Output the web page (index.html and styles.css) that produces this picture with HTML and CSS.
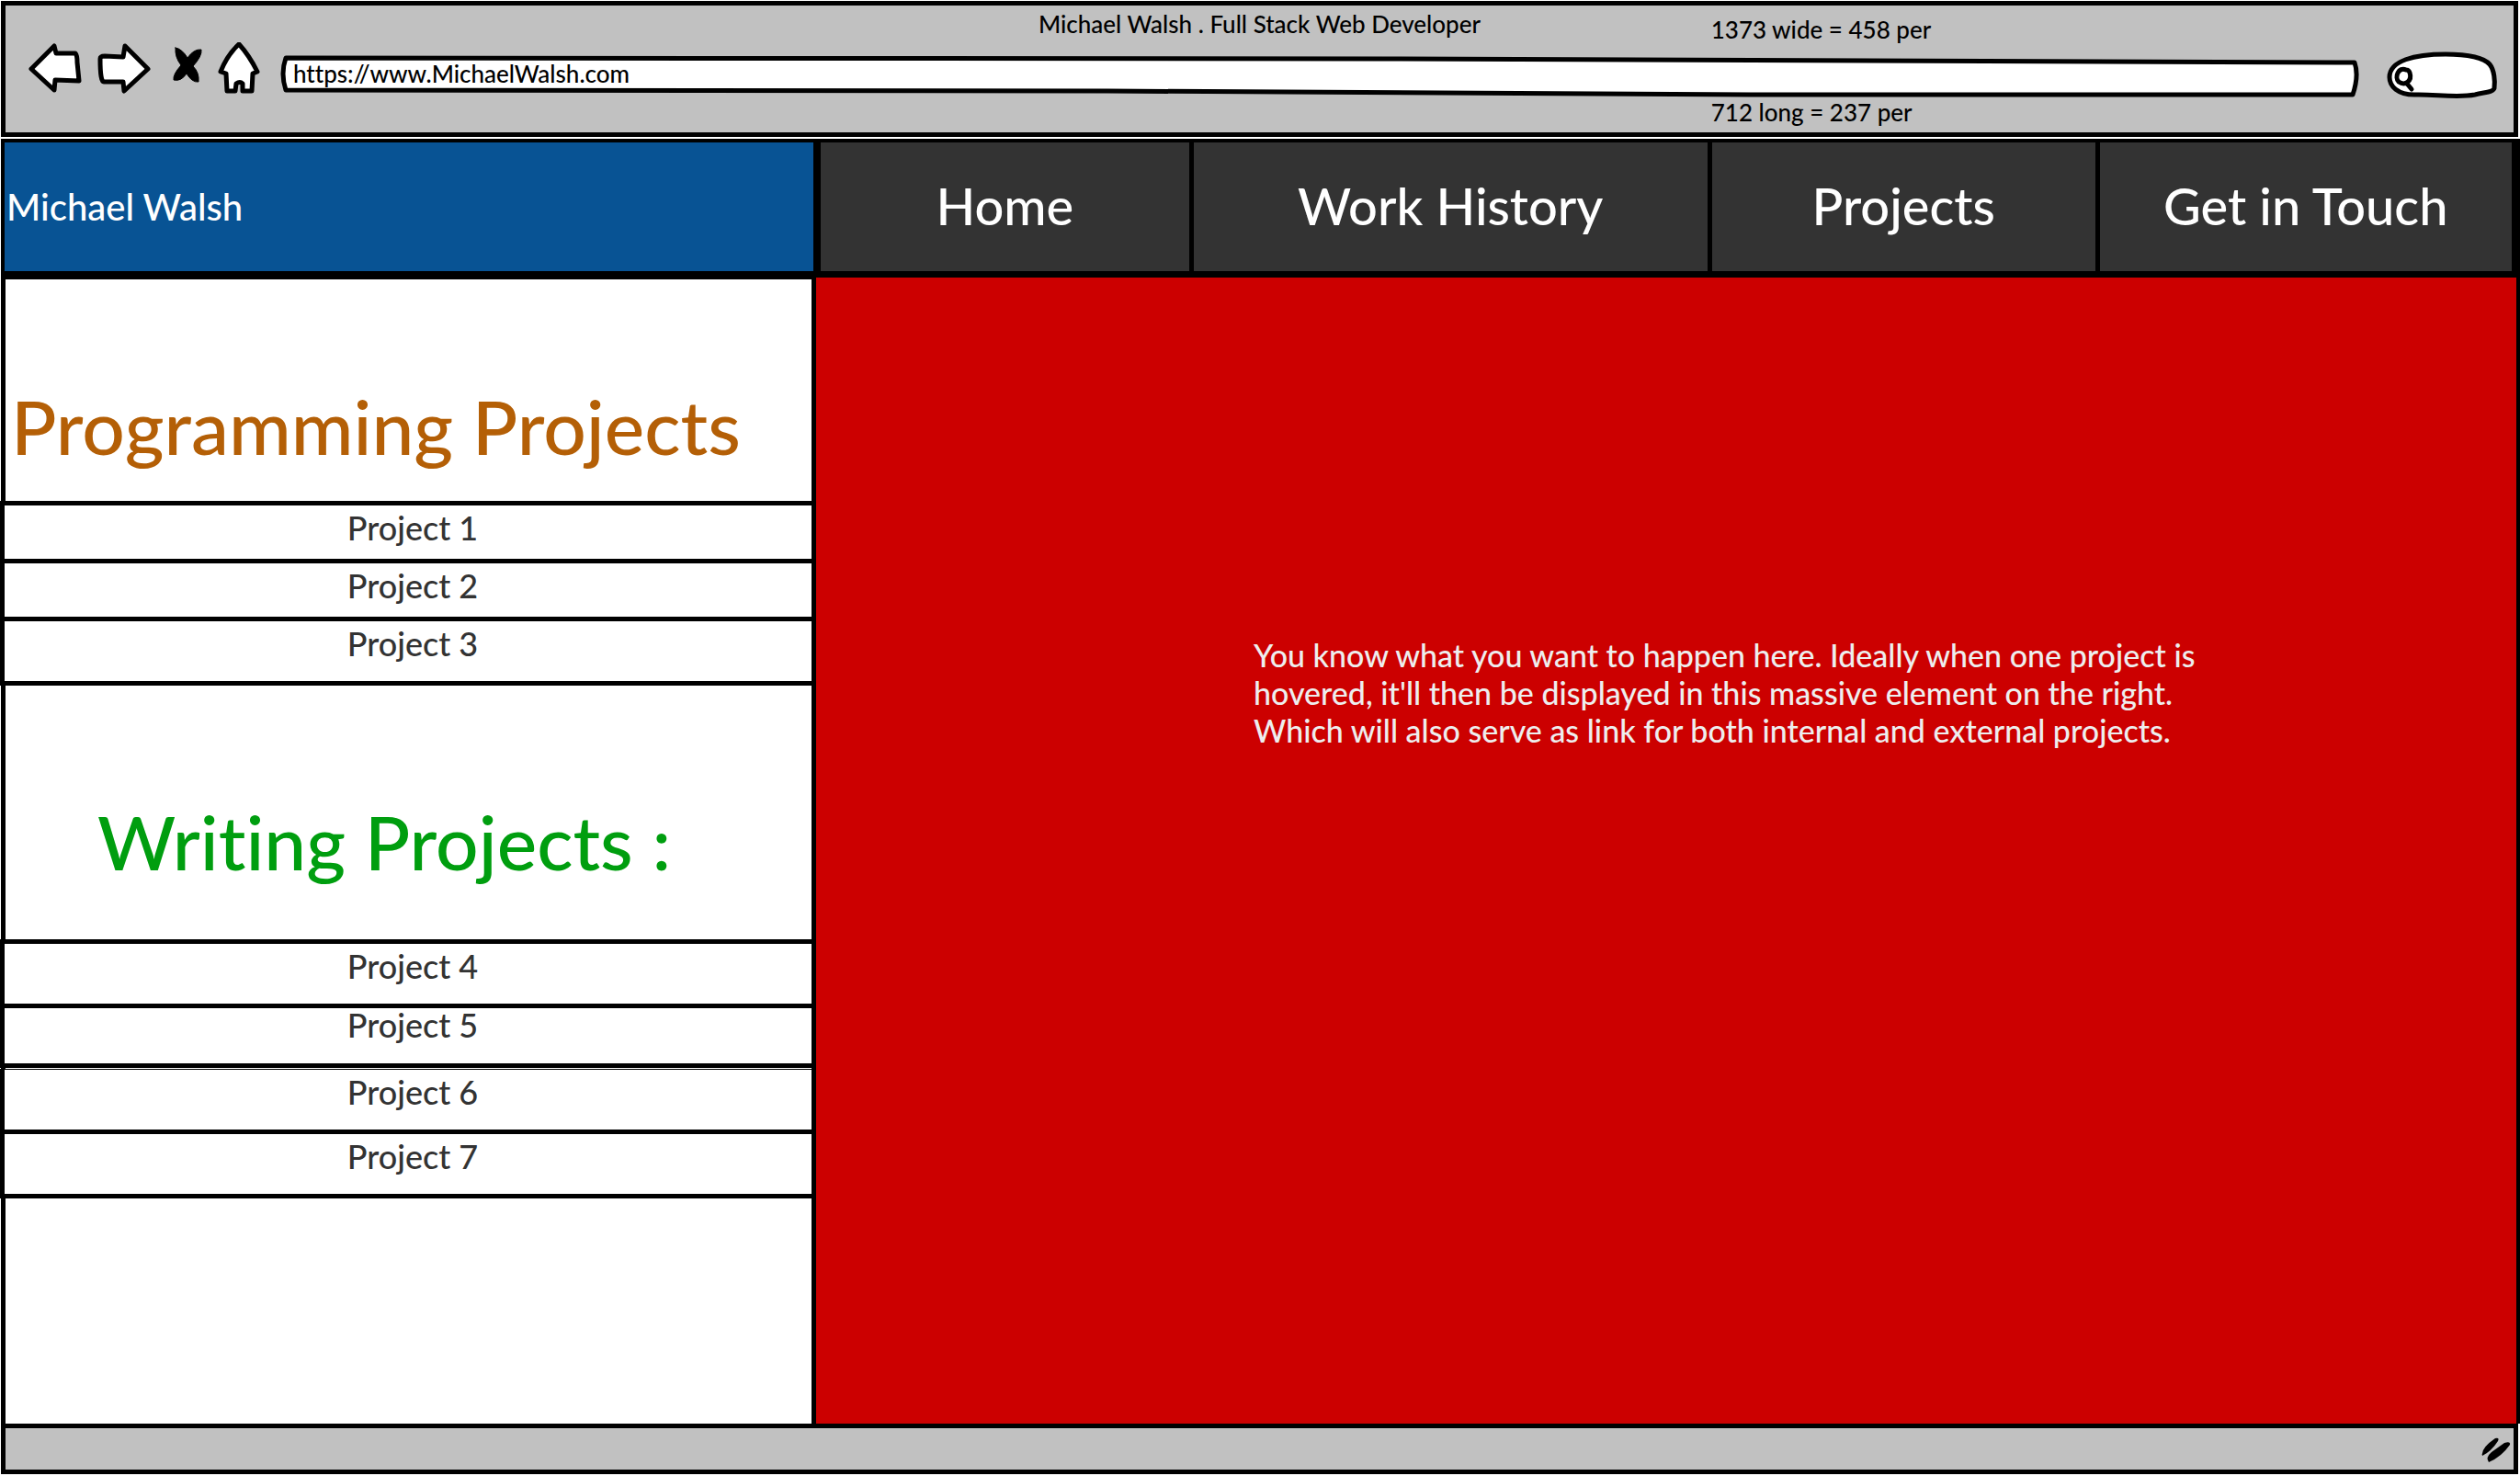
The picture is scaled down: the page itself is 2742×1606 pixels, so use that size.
FILE: index.html
```html
<!DOCTYPE html>
<html lang="en">
<head>
<meta charset="utf-8">
<meta name="viewport" content="width=device-width, initial-scale=1">
<title>Michael Walsh . Full Stack Web Developer</title>
<link rel="stylesheet" href="styles.css">
</head>
<body>
<div class="window">
  <header class="chrome">
    <div class="chrome-top">
      <p class="chrome-title">Michael Walsh . Full Stack Web Developer</p>
      <p class="note">1373 wide = 458 per</p>
    </div>
    <div class="toolbar">
      <button class="tool" type="button" aria-label="Back">
        <svg width="58" height="56" viewBox="0 0 58 56"><path d="M3 29 L28 4 L30 12 L51 12 Q53 14 53 22 L55 42 L29 41 L28 52 Z"/></svg>
      </button>
      <button class="tool" type="button" aria-label="Forward">
        <svg width="60" height="56" viewBox="0 0 60 56"><path d="M4 18 Q4 15 9 15 L29 16 L31 4 L56 29 L30 53 L29 43 L8 43 Q4 43 4 18 Z"/></svg>
      </button>
      <button class="tool tool-stop" type="button" aria-label="Stop">
        <svg width="34" height="56" viewBox="0 0 34 56"><path class="solid" d="M4 6 Q11 7 17 17 Q24 7 32 8 Q33 15 23 26 Q30 33 29 43 Q22 44 16 34 Q10 43 2 41 Q1 35 10 25 Q3 16 4 6 Z"/></svg>
      </button>
      <button class="tool" type="button" aria-label="Home">
        <svg width="46" height="58" viewBox="0 0 46 58"><path d="M23 2 Q34 14 43 32 L38 34 L37 53 L27 53 L27 45 Q24 42 20 45 L19 53 L10 53 L9 34 L3 32 Q10 14 23 2 Z"/></svg>
      </button>
      <div class="address">
        <svg class="outline" viewBox="0 0 2264 46" preserveAspectRatio="none" aria-hidden="true"><path d="M6 3 L1200 4 L2257 8 Q2262 22 2255 43 L1600 43 L900 39 L6 38 Q0 20 6 3 Z"/></svg>
        <input class="address-input" type="text" value="https://www.MichaelWalsh.com" aria-label="Address">
      </div>
      <div class="search">
        <svg class="outline" viewBox="0 0 120 52" preserveAspectRatio="none" aria-hidden="true"><path d="M3 28 C3 10 30 3 64 3 C88 3 106 7 112 14 C117 20 118 32 117 40 C116 44 108 44 96 47 C76 51 50 46 30 47 C12 47 3 38 3 28 Z"/><path d="M21 20 C13 16 8 28 13 33 C20 38 28 32 25 23 Q24 20 21 20 M22 35 L27 41"/></svg>
        <input class="search-input" type="search" aria-label="Search">
      </div>
    </div>
    <p class="note">712 long = 237 per</p>
  </header>

  <div class="banner">
    <a class="brand" href="#home">Michael Walsh</a>
    <nav class="nav">
      <a class="nav-link nav-home" href="#home">Home</a>
      <a class="nav-link nav-work" href="#work">Work History</a>
      <a class="nav-link nav-projects" href="#projects">Projects</a>
      <a class="nav-link nav-contact" href="#contact">Get in Touch</a>
    </nav>
  </div>

  <main class="content">
    <aside class="sidebar">
      <h1 class="group-title programming">Programming Projects</h1>
      <ul class="projects">
        <li><a class="project short" href="#p1">Project 1</a></li>
        <li><a class="project short" href="#p2">Project 2</a></li>
        <li><a class="project" href="#p3">Project 3</a></li>
      </ul>
      <h1 class="group-title writing">Writing Projects :</h1>
      <ul class="projects">
        <li><a class="project" href="#p4">Project 4</a></li>
        <li><a class="project closed" href="#p5">Project 5</a></li>
        <li><a class="project thin" href="#p6">Project 6</a></li>
        <li><a class="project" href="#p7">Project 7</a></li>
      </ul>
    </aside>
    <section class="preview">
      <p class="preview-text">You know what you want to happen here. Ideally when one project is<br>hovered, it'll then be displayed in this massive element on the right.<br>Which will also serve as link for both internal and external projects.</p>
    </section>
  </main>

  <footer class="status">
    <svg class="grip" width="32" height="28" viewBox="0 0 32 28" aria-hidden="true"><path d="M15 1 Q20 0 18 4 Q11 15 1 20 Q-1 12 15 1 Z"/><path d="M25 6 Q32 4 31 8 Q22 21 8 27 Q4 22 11 16 Z"/></svg>
  </footer>
</div>
</body>
</html>
```
FILE: styles.css
```css
* { box-sizing: border-box; }

body {
  margin: 0;
  background: #fff;
  color: #000;
  font-family: Lato, "Open Sans", sans-serif;
  font-weight: 500;
  font-variant-ligatures: none;
}

p, h1, ul { margin: 0; padding: 0; }
ul { list-style: none; }
a { color: inherit; text-decoration: none; }

.window {
  display: flex;
  flex-direction: column;
  min-height: 100vh;
  padding: 1px 0 2px 1px;
}

/* Browser chrome */
.chrome {
  display: flex;
  flex-direction: column;
  height: 148px;
  margin-right: 2px;
  border: 5px solid #000;
  background: #c1c1c1;
  font-size: 26px;
  line-height: 32px;
}
.chrome-top { display: grid; height: 40px; }
.chrome-title { grid-area: 1 / 1; padding-top: 4px; text-align: center; }
.note { padding-left: 68%; }
.chrome-top .note { grid-area: 1 / 1; padding-top: 10px; }

.toolbar {
  display: flex;
  height: 60px;
  padding: 0 18px 0 25px;
}
.tool {
  flex: none;
  align-self: flex-start;
  margin: 0 16px 0 0;
  padding: 0;
  border: 0;
  background: none;
}
.tool-stop { margin-left: 6px; }
.tool svg { display: block; }
.tool path, .outline path {
  fill: #fff;
  stroke: #000;
  stroke-width: 5px;
  stroke-linejoin: round;
  stroke-linecap: round;
}
.tool .solid { fill: #000; stroke-width: 1px; }

.address, .search { display: grid; }
.address { flex: 1; height: 46px; margin: 14px 28px 0 6px; }
.search { flex: none; width: 120px; height: 52px; margin-top: 10px; }
.outline { grid-area: 1 / 1; width: 100%; height: 100%; overflow: visible; }
.address-input, .search-input {
  grid-area: 1 / 1;
  z-index: 1;
  width: 100%;
  min-width: 0;
  border: 0;
  background: transparent;
  color: #000;
  font: inherit;
  outline: 0;
}
.address-input { height: 40px; padding: 0 14px; }
.search-input { padding: 0 16px 0 32px; }

/* Site banner */
.banner {
  display: grid;
  grid-template-columns: 888fr 1853fr;
  height: 151px;
  margin-top: 2px;
  background: #000;
  color: #fff;
}
.brand {
  display: flex;
  align-items: center;
  margin-right: 4px;
  padding: 0 2px;
  border: solid #000;
  border-width: 4px 0 7px 4px;
  background: #085394;
  font-size: 40px;
}
.nav { display: flex; padding: 4px 9px 7px 4px; gap: 5px; }
.nav-link {
  display: flex;
  align-items: center;
  justify-content: center;
  padding-bottom: 4px;
  background: #333;
  font-size: 56px;
}
.nav-home { flex: 401 1 0; }
.nav-work { flex: 560 1 0; }
.nav-projects { flex: 417 1 0; }
.nav-contact { flex: 449 1 0; }

/* Project list and preview */
.content {
  display: grid;
  flex: 1;
  grid-template-columns: 887fr 1854fr;
}
.sidebar {
  border: solid #000;
  border-width: 2px 5px 0 5px;
}
.group-title {
  font-size: 82px;
  font-weight: 500;
  line-height: 96px;
}
.programming { padding: 111px 0 34px 6px; color: #b45f06; }
.writing { padding: 121px 0 59px 100px; color: #009e0f; }

.projects {
  margin-left: -6px;
  border-bottom: 5px solid #000;
}
.project {
  display: block;
  height: 70px;
  padding: 2px 0 0 10px;
  border: solid #000;
  border-width: 5px 0 0 5px;
  background: #fff;
  color: #333;
  font-size: 36px;
  line-height: 44px;
  text-align: center;
}
.project.short { height: 63px; }
.project.closed {
  padding-top: 0;
  border-bottom-width: 5px;
  line-height: 36px;
}
.project.thin {
  height: 66px;
  margin-top: 1px;
  border-top-width: 1px;
}
.preview {
  border-right: 4px solid #000;
  background: #c00;
}
.preview-text {
  padding: 390px 0 0 476px;
  color: #eee;
  font-size: 34px;
  line-height: 41px;
}

/* Status bar */
.status {
  display: flex;
  align-items: center;
  justify-content: flex-end;
  height: 55px;
  margin-right: 2px;
  padding: 2px 3px 0 0;
  border: 5px solid #000;
  background: #c1c1c1;
}
```
